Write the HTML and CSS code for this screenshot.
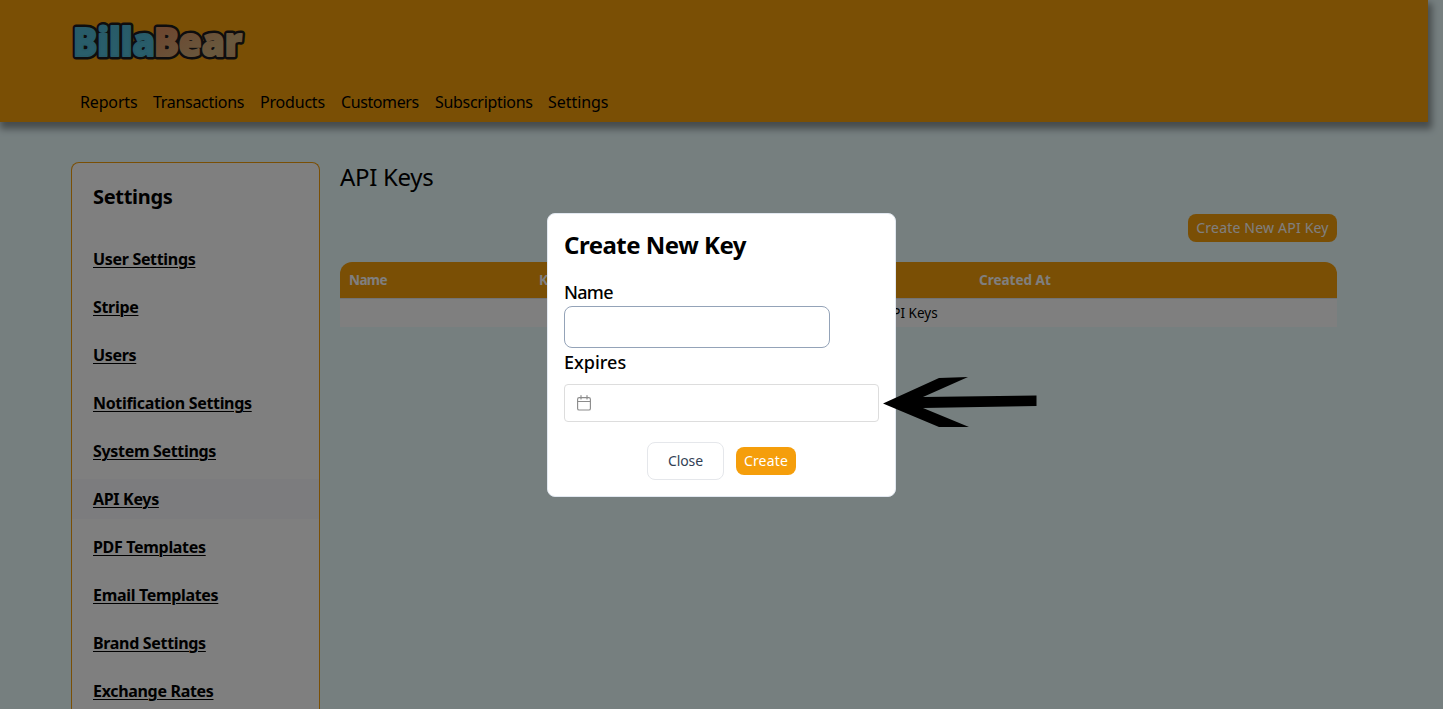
FILE: index.html
```html
<!DOCTYPE html>
<html lang="en">
<head>
<meta charset="utf-8">
<title>BillaBear - API Keys</title>
<link rel="stylesheet" href="styles.css">
</head>
<body>
<div class="app">
  <header class="header">
    <svg class="logo" width="176" height="42" viewBox="0 0 176 42" role="img" aria-label="BillaBear">
      <defs>
        <linearGradient id="cool" x1="0" y1="0" x2="0" y2="1"><stop offset="0" stop-color="#4fb3d0"/><stop offset="1" stop-color="#55c0d8"/></linearGradient>
        <linearGradient id="warm" x1="0" y1="0" x2="1" y2="1"><stop offset="0.2" stop-color="#d98e60"/><stop offset="0.7" stop-color="#d2b17b"/><stop offset="1" stop-color="#d29a68"/></linearGradient>
      </defs>
      <g class="logo-text">
        <text class="logo-edge" x="2" y="35.5" textLength="82" lengthAdjust="spacingAndGlyphs">Billa</text>
        <text class="logo-edge" x="83" y="35.5" textLength="88" lengthAdjust="spacingAndGlyphs">Bear</text>
        <text class="logo-cool" x="2" y="35.5" textLength="82" lengthAdjust="spacingAndGlyphs">Billa</text>
        <text class="logo-warm" x="83" y="35.5" textLength="88" lengthAdjust="spacingAndGlyphs">Bear</text>
      </g>
    </svg>
    <nav class="nav">
      <a class="n1">Reports</a><a class="n2">Transactions</a><a class="n3">Products</a><a class="n4">Customers</a><a class="n5">Subscriptions</a><a class="n6">Settings</a>
    </nav>
  </header>
  <div class="body">
    <aside class="sidebar">
      <h2>Settings</h2>
      <ul class="menu">
        <li><a>User Settings</a></li>
        <li><a>Stripe</a></li>
        <li><a>Users</a></li>
        <li><a>Notification Settings</a></li>
        <li><a>System Settings</a></li>
        <li class="active"><a>API Keys</a></li>
        <li><a>PDF Templates</a></li>
        <li><a>Email Templates</a></li>
        <li><a>Brand Settings</a></li>
        <li><a>Exchange Rates</a></li>
      </ul>
    </aside>
    <main class="content">
      <h1>API Keys</h1>
      <div class="actions"><button class="btn">Create New API Key</button></div>
      <div class="table">
        <div class="thead"><span>Name</span><span>Key</span><span>Created At</span></div>
        <div class="empty">There are currently no API Keys</div>
      </div>
    </main>
  </div>
</div>
<div class="overlay">
  <section class="modal">
    <h2>Create New Key</h2>
    <label class="label label-name">Name</label>
    <div class="input"></div>
    <label class="label label-expires">Expires</label>
    <div class="date">
      <svg width="16" height="18" viewBox="0 0 16 18" fill="none" stroke="#8c8c8c" stroke-width="1.15" stroke-linecap="round">
        <rect x="1.6" y="3.6" width="12.8" height="12.4" rx="1.6"/>
        <path d="M1.6 7.5H14.4M5 1.5V5M11 1.5V5"/>
      </svg>
    </div>
    <div class="buttons"><button class="close">Close</button><button class="btn create">Create</button></div>
  </section>
</div>
<svg class="arrow" width="156" height="52" viewBox="0 0 156 52"><path d="M1 27.5L57 2L86 1L41 21L154.5 19.5V30L41 32L87 51L57 51Z"/></svg>
</body>
</html>
```
FILE: styles.css
```css
* { box-sizing: border-box; margin: 0; padding: 0; }
body { width: 1443px; height: 709px; overflow: hidden; background: #ecfeff; color: #000; font-family: "Noto Sans", "Open Sans", sans-serif; font-size: 15px; }
button { font-family: inherit; border: 0; }
.app { width: 1428px; height: 709px; display: flex; flex-direction: column; }
.header { height: 122px; flex: none; padding: 20px 71px 0; background: #f59e0b; box-shadow: 2px 5px 7px 2px rgba(0, 0, 0, .4); display: flex; flex-direction: column; }
.logo { display: block; overflow: visible; }
.logo-text { font-family: "Open Sans", sans-serif; font-weight: 800; font-size: 39px; stroke-linejoin: round; }
.logo-edge { fill: #1c1a1c; stroke: #1c1a1c; stroke-width: 7; }
.logo-cool { fill: url(#cool); stroke: #50b6d0; stroke-width: 2; }
.logo-warm { fill: url(#warm); stroke: url(#warm); stroke-width: 2; }
.nav { display: flex; gap: 16px; padding-left: 9px; margin-top: 28px; font-size: 16px; line-height: 25px; letter-spacing: -.3px; white-space: nowrap; }
.n1 { width: 57px; letter-spacing: -.15px; }
.n2 { width: 91px; }
.n3 { width: 65px; letter-spacing: -.2px; }
.n4 { width: 78px; letter-spacing: -.4px; }
.n5 { width: 97px; }
.n6 { letter-spacing: -.05px; }
.body { flex: 1; min-height: 0; display: grid; grid-template-columns: 249px 997px; grid-template-rows: minmax(0, 1fr); gap: 20px; padding: 40px 0 0 71px; }
.sidebar { background: #fff; border: 1px solid #f59e0b; border-bottom: 0; border-radius: 8px 8px 0 0; }
.sidebar h2 { font-size: 20px; line-height: 28px; padding: 20px 0 0 21px; height: 76px; letter-spacing: -.3px; }
.menu { list-style: none; display: flex; flex-direction: column; gap: 8px; }
.menu li { height: 40px; line-height: 40px; padding-left: 21px; font-weight: 700; font-size: 16px; letter-spacing: -.32px; text-decoration: underline; text-underline-offset: 2px; text-decoration-thickness: 1px; }
.menu li:last-child { height: 37px; }
.menu .active { background: #f8f9fd; }
.content h1 { font-size: 24px; font-weight: 400; line-height: 32px; height: 32px; margin-top: -1px; letter-spacing: -.3px; }
.actions { display: flex; justify-content: flex-end; margin-top: 21px; }
.btn { width: 149px; height: 28px; border-radius: 8px; background: #f59e0b; color: #fff; font-size: 14px; line-height: 28px; letter-spacing: .2px; white-space: nowrap; }
.table { margin-top: 20px; font-size: 14px; }
.thead { display: grid; grid-template-columns: 190px 440px 1fr; height: 36px; line-height: 36px; border-radius: 12px 12px 0 0; background: #f59e0b; color: #fff; font-weight: 700; font-size: 13.5px; }
.thead span { padding-left: 9px; }
.thead span:first-child { letter-spacing: -.6px; }
.empty { height: 29px; line-height: 29px; background: #fff; border-top: 1px solid #e5e7eb; text-align: center; font-size: 13.5px; }
.overlay { position: fixed; inset: 0; display: flex; align-items: center; justify-content: center; background: rgba(0, 0, 0, .5); }
.modal { width: 349px; height: 284px; padding: 15px 17px; background: #fff; border: 1px solid #e2e8f0; border-radius: 8px; display: flex; flex-direction: column; }
.modal h2 { font-size: 24px; line-height: 32px; letter-spacing: -.5px; margin: 0 0 1px -1px; }
.label { margin: 16px 0 0 -1px; font-size: 18px; font-weight: 500; line-height: 28px; }
.label-name { letter-spacing: -.7px; }
.input { width: 266px; height: 42px; margin-left: -1px; border: 1px solid #94a3b8; border-radius: 8px; }
.label-expires { margin-top: 0; }
.date { width: 315px; height: 38px; margin: 8px 0 0 -1px; border: 1px solid #ddd; border-radius: 4px; padding: 9px 0 0 11px; }
.buttons { display: flex; justify-content: center; align-items: center; gap: 12px; margin-top: 20px; }
.close { width: 77px; height: 38px; border: 1px solid #e5e7eb; border-radius: 8px; background: #fff; color: #334155; font-size: 14px; letter-spacing: -.1px; }
.create { width: 60px; }
.arrow { position: absolute; left: 882px; top: 376px; }
```
